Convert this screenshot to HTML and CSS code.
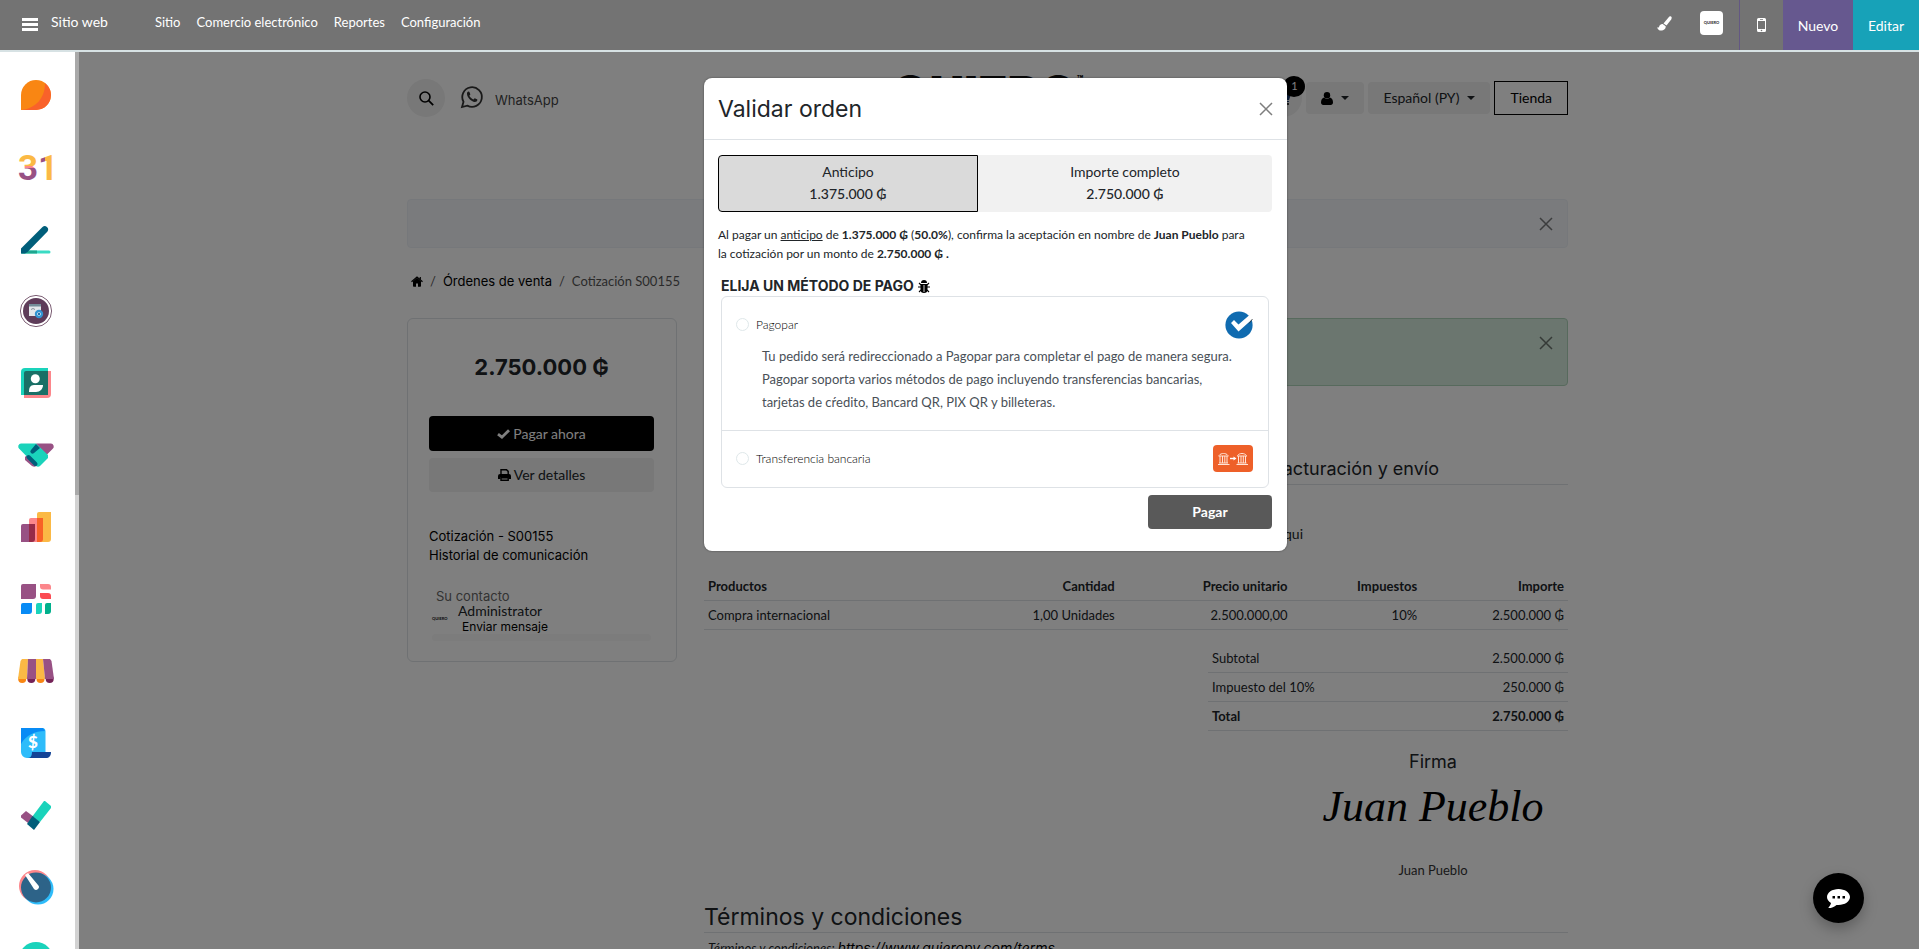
FILE: index.html
```html
<!DOCTYPE html>
<html lang="es">
<head>
<meta charset="utf-8">
<title>Cotización S00155</title>
<link rel="stylesheet" href="styles.css">
</head>
<body>
<header class="topbar">
  <button class="topbar-menu" aria-label="Menú"><svg width="16" height="14" viewBox="0 0 16 14"><path d="M0 1h16v3H0zM0 6h16v3H0zM0 11h16v3H0z" fill="#fff"/></svg></button>
  <a class="topbar-brand" href="#">Sitio web</a>
  <nav class="topbar-nav">
    <a href="#">Sitio</a><a href="#">Comercio electrónico</a><a href="#">Reportes</a><a href="#">Configuración</a>
  </nav>
  <div class="topbar-tools">
    <button class="tool-brush" aria-label="Tema"><svg width="15" height="15" viewBox="0 0 15 15"><path d="M14 .5c1 .7.8 1.800.2 2.900L9.500 9.500 6.500 7.400 11.500 1.400C12.300.5 13.100 0 14 .5z" fill="#fff"/><path d="M5.700 8.100l3 2.200c.2 2.500-1.700 4.300-4.700 4.300-1.800 0-3.300-1.200-3.900-3.400 1.300.7 1.800.3 2.200-.9.500-1.400 1.700-2.400 3.400-2.200z" fill="#fff"/></svg></button>
    <button class="tool-user" aria-label="Cuenta"><span>QUIERO</span></button>
    <button class="tool-phone" aria-label="Vista móvil"><svg width="9" height="14" viewBox="0 0 9 14"><path fill-rule="evenodd" d="M1.500 0h6A1.500 1.500 0 0 1 9 1.500v11A1.500 1.500 0 0 1 7.500 14h-6A1.500 1.500 0 0 1 0 12.500v-11A1.500 1.500 0 0 1 1.500 0zM1 3v8h7V3zM4.500 11.700a.8.8 0 1 0 0 1.600.8.8 0 0 0 0-1.600zM3 1.200v.7h3v-.7z" fill="#fff"/></svg></button>
    <button class="tool-new">Nuevo</button>
    <button class="tool-edit">Editar</button>
  </div>
</header>
<div class="shell">
  <aside class="apps">
    <a href="#" aria-label="Conversaciones"><svg viewBox="0 0 36 36"><path d="M3 18a15 15 0 0 1 30 0v0a15 15 0 0 1-15 15H3z" fill="#f98613"/><path d="M27 6a15 15 0 0 1-9 27H4C18 31 27 21 27 6z" fill="#f9622a"/></svg></a>
    <a href="#" aria-label="Calendario"><svg viewBox="0 0 36 36"><defs><linearGradient id="g3" gradientUnits="userSpaceOnUse" x1="0" y1="4" x2="0" y2="32"><stop offset=".45" stop-color="#fbb945"/><stop offset=".45" stop-color="#fc868b"/><stop offset=".55" stop-color="#fc868b"/><stop offset=".55" stop-color="#985184"/></linearGradient><linearGradient id="g1" gradientUnits="userSpaceOnUse" x1="18" y1="0" x2="36" y2="0"><stop offset=".5" stop-color="#985184"/><stop offset=".5" stop-color="#fbb945"/></linearGradient></defs><text x="0" y="31" class="cal"><tspan fill="url(#g3)">3</tspan><tspan fill="url(#g1)">1</tspan></text></svg></a>
    <a href="#" aria-label="Firma"><svg viewBox="0 0 36 36"><path d="M8 29.500h23a1.500 1.500 0 0 1 0 3H3z" fill="#3adbc4"/><path d="M8 29.500h11v3H3z" fill="#1ea68f"/><path d="M24.500 6a3.400 3.400 0 0 1 5 4.500L9.500 31 7 32.500H3v-5z" fill="#005e7a"/></svg></a>
    <a href="#" aria-label="Contenido"><svg viewBox="0 0 36 36"><circle cx="18" cy="18" r="15.600" fill="#fff" stroke="#7d5f75" stroke-width="1"/><circle cx="18" cy="18" r="13" fill="#5e3c59"/><path d="M11 11h12v12H11z" fill="#e2e7ea"/><path d="M11 11h12v2.500H11z" fill="#738d98"/><path d="M13 16.500l2-1 2 1" stroke="#869199" fill="none"/><circle cx="21" cy="21" r="3" fill="#fff" stroke="#3194d2" stroke-width="2.400"/><circle cx="21" cy="21" r="1.200" fill="#1c6eaa"/></svg></a>
    <a href="#" aria-label="Contactos"><svg viewBox="0 0 36 36"><path d="M6 6h27v23a4 4 0 0 1-4 4H6z" fill="#fc868b"/><path d="M7 3h23v27H3V7a4 4 0 0 1 4-4z" fill="#1ad3bb"/><path d="M8 6h22v24H6V8a2 2 0 0 1 2-2z" fill="#1a6f66"/><circle cx="17.300" cy="13.700" r="4.500" fill="#fff"/><path d="M16 20h9c0 4-3 7-7 7h-7c0-4 1-7 5-7z" fill="#fff"/></svg></a>
    <a href="#" aria-label="CRM"><svg viewBox="0 0 36 36"><path d="M18 6.500h15a3 3 0 0 1 2 5L28.500 18z" fill="#985184"/><path d="M10 17L7 20v3l7 6c2 1 4 1 5-1z" fill="#985184"/><path d="M3 6.500h15L30 18v3l-8 8c-1 1-3 1-4 0L1 11.500a3 3 0 0 1 2-5z" fill="#1ad3bb"/><path d="M18 7l4 4h0l-6 5a2 2 0 0 1-3-3z" fill="#005e7a"/><path d="M10.500 20l7 7" stroke="#005e7a" stroke-width="4" stroke-linecap="round"/></svg></a>
    <a href="#" aria-label="Ventas"><svg viewBox="0 0 36 36"><path d="M21 3h12v27a3 3 0 0 1-3 3H19V5a2 2 0 0 1 2-2z" fill="#fbb945"/><path d="M13 9h6v24h-8V11a2 2 0 0 1 2-2z" fill="#fc868b"/><path d="M19 9h6v21a3 3 0 0 1-3 3h-3z" fill="#f86126"/><path d="M5 15h6v18H3V17a2 2 0 0 1 2-2z" fill="#985184"/><path d="M11 15h6v15a3 3 0 0 1-3 3h-3z" fill="#962b48"/></svg></a>
    <a href="#" aria-label="Tableros"><svg viewBox="0 0 36 36"><path d="M5 3h13v12a3 3 0 0 1-3 3H3V5a2 2 0 0 1 2-2z" fill="#985184"/><path d="M22 3h8a3 3 0 0 1 3 3v2.600h-8a3 3 0 0 1-3-3z" fill="#fc868b"/><path d="M22 12h8a3 3 0 0 1 3 3v3h-8a3 3 0 0 1-3-3z" fill="#fb4b53"/><path d="M5 22h9v8a3 3 0 0 1-3 3H3v-9a2 2 0 0 1 2-2z" fill="#088bf5"/><path d="M20 22h4v8a3 3 0 0 1-3 3h-3v-9a2 2 0 0 1 2-2z" fill="#1ad3bb"/><path d="M29 22h4v8a3 3 0 0 1-3 3h-3v-9a2 2 0 0 1 2-2z" fill="#00b08c"/></svg></a>
    <a href="#" aria-label="Punto de venta"><svg viewBox="0 0 36 36"><g fill="#f98613"><circle cx="4.200" cy="26" r="4"/><circle cx="22.500" cy="26" r="4"/></g><g fill="#742257"><circle cx="13.300" cy="26" r="4"/><circle cx="31.700" cy="26" r="4"/></g><path d="M4 6h6L9 26H0L2.500 8z" fill="#fbb945"/><path d="M10 6h8v20H9z" fill="#985184"/><path d="M18 6h7l2 20h-9z" fill="#fbb945"/><path d="M25 6h7l1.500 2L36 26h-9z" fill="#985184"/></svg></a>
    <a href="#" aria-label="Facturación"><svg viewBox="0 0 36 36"><path d="M3 3h22a3 3 0 0 1 2.500 3v22a5 5 0 0 1-5 5H9a6 6 0 0 1-6-6z" fill="#2ebcfa"/><path d="M3 3h22l2 3C17 6 8 10 3 19z" fill="#088bf5"/><path d="M14 27h19c0 4-2 6-5 6H10c3 0 4-3 4-6z" fill="#144496"/><text x="10" y="23" class="usd" fill="#fff">$</text></svg></a>
    <a href="#" aria-label="Tareas"><svg viewBox="0 0 36 36"><path d="M26 4l1 0 6 5v2L22 25l-8-5z" fill="#1ad3bb"/><path d="M8 14l8 6-6 6-7-5.500v-2z" fill="#985184"/><path d="M14.500 19l7.500 6-6 8-7-6z" fill="#005e7a"/></svg></a>
    <a href="#" aria-label="Horas"><svg viewBox="0 0 36 36"><circle cx="17" cy="17" r="16" fill="#fc868b"/><circle cx="20" cy="20" r="15.500" fill="#2ebcfa"/><circle cx="18" cy="18.500" r="15" fill="#2d6388"/><path d="M7 6l3-2 10 12a2.500 2.500 0 0 1-4 4z" fill="#fff"/></svg></a>
    <a href="#" aria-label="Más"><svg viewBox="0 0 36 36"><circle cx="18" cy="18" r="17" fill="#1ad3bb"/></svg></a>
  </aside>
  <div class="apps-track"></div>
  <main class="stage">
    <div class="page">
      <div class="site-head">
        <div class="head-left">
          <button class="round" aria-label="Buscar"><svg width="15" height="15" viewBox="0 0 15 15"><circle cx="6" cy="6" r="5" fill="none" stroke="#000" stroke-width="1.600"/><path d="M9.700 9.700l4.500 4.500" stroke="#000" stroke-width="1.800"/></svg></button>
          <a class="wa" href="#"><svg width="22" height="22" viewBox="0 0 22 22"><path d="M1 21l1.500-5.200A9.800 9.800 0 1 1 6.300 19.600z" fill="none" stroke="#333" stroke-width="1.800"/><path d="M7.500 5.500c-1 .3-1.600 1.200-1.500 2.400.3 3.700 4.300 7.600 7.700 8 1.400.1 2.600-.8 2.700-2 .1-.5-.1-.6-2.500-1.700-.6-.2-1 1.300-1.600 1.200-1.500-.4-3.600-2.400-3.900-3.600 0-.4 1-1 .9-1.500-.7-2-.8-2.900-1.800-2.800z" fill="#333"/></svg><span>WhatsApp</span></a>
        </div>
        <a class="logo" href="#">QUIERO<sup>™</sup></a>
        <div class="head-right">
          <button class="round cart" aria-label="Carrito"><svg width="15" height="13" viewBox="0 0 15 13"><path d="M0 0h3l.5 2H15l-2 6H4.500l.2 1H13v1H4L2.300 1H0z" fill="#1c3a70"/><circle cx="5" cy="12" r="1"/><circle cx="12" cy="12" r="1"/></svg><span class="badge">1</span></button>
          <button class="soft" aria-label="Usuario"><svg width="12" height="13" viewBox="0 0 12 13"><circle cx="6" cy="3.200" r="3.200"/><path d="M3 5.500C1 6 0 8 0 10.500 0 12 1 13 2.200 13h7.600C11 13 12 12 12 10.500 12 8 11 6 9 5.500a4.300 4.300 0 0 1-6 0z"/></svg><i class="caret"></i></button>
          <button class="soft">Español (PY)<i class="caret"></i></button>
          <a class="shop" href="#">Tienda</a>
        </div>
      </div>
      <div class="alert info"><button class="x" aria-label="Cerrar"><svg width="14" height="14" viewBox="0 0 14 14"><path d="M1 1l12 12M13 1L1 13" stroke="#000" stroke-width="1.500"/></svg></button></div>
      <nav class="crumbs">
        <a href="#" aria-label="Inicio"><svg width="12" height="11" viewBox="0 0 12 11"><path d="M6 1.800l4 3.500V10a.7.7 0 0 1-.7.700H7V7.500H5v3.200H2.700A.7.700 0 0 1 2 10V5.300z"/><path d="M.5 5.800L6 1l5.500 4.800M9.300 1v3" fill="none" stroke="#000" stroke-width="1.200"/></svg></a><span>/</span><a class="head-font" href="#">Órdenes de venta</a><span>/</span><span>Cotización S00155</span>
      </nav>
      <div class="cols">
        <section class="card">
          <h2>2.750.000 ₲</h2>
          <button class="btn dark"><svg width="13" height="10" viewBox="0 0 13 10"><path d="M1 5.200l3.900 3L12 1.200" fill="none" stroke="#fff" stroke-width="2.800"/></svg>Pagar ahora</button>
          <button class="btn light"><svg width="13" height="12" viewBox="0 0 13 12"><path d="M3 5.500V.7h5.500l1.700 1.700v3.100M3 8.700v2.600h7.200V8.700z" fill="none" stroke="#000" stroke-width="1.400"/><path fill-rule="evenodd" d="M2 5h9a2 2 0 0 1 2 2v3h-2.500V8h-8v2H0V7a2 2 0 0 1 2-2z"/></svg>Ver detalles</button>
          <div class="links"><a href="#">Cotización - S00155</a><a href="#">Historial de comunicación</a></div>
          <div class="contact">
            <p class="contact-title">Su contacto</p>
            <div class="contact-row"><span class="mini">QUIERO</span><div><p class="who">Administrator</p><a href="#">Enviar mensaje</a></div></div>
            <div class="strip"></div>
          </div>
        </section>
        <section class="order">
          <div class="alert ok"><button class="x" aria-label="Cerrar"><svg width="14" height="14" viewBox="0 0 14 14"><path d="M1 1l12 12M13 1L1 13" stroke="#000" stroke-width="1.500"/></svg></button></div>
          <h3 class="ship">facturación y envío</h3>
          <p class="addr">Aqui</p>
          <table class="lines">
            <thead><tr><th>Productos</th><th>Cantidad</th><th>Precio unitario</th><th>Impuestos</th><th>Importe</th></tr></thead>
            <tbody><tr><td>Compra internacional</td><td>1,00 Unidades</td><td>2.500.000,00</td><td>10%</td><td>2.500.000 ₲</td></tr></tbody>
          </table>
          <table class="totals">
            <tbody><tr><td>Subtotal</td><td>2.500.000 ₲</td></tr><tr><td>Impuesto del 10%</td><td>250.000 ₲</td></tr><tr class="sum"><td>Total</td><td>2.750.000 ₲</td></tr></tbody>
          </table>
          <div class="sign"><h4>Firma</h4><p class="ink">Juan Pueblo</p><p>Juan Pueblo</p></div>
          <h3 class="terms">Términos y condiciones</h3>
          <p class="terms-link"><em>Términos y condiciones: <a href="#">https://www.quieropy.com/terms</a></em></p>
        </section>
      </div>
    </div>
    <div class="backdrop">
      <form class="modal" role="dialog" aria-labelledby="mt">
        <div class="modal-head"><h2 id="mt">Validar orden</h2><button type="button" class="x" aria-label="Cerrar"><svg width="14" height="14" viewBox="0 0 14 14"><path d="M1 1l12 12M13 1L1 13" stroke="#000" stroke-width="1.500"/></svg></button></div>
        <div class="modal-body">
          <div class="amounts"><button type="button" class="on"><span>Anticipo</span><b>1.375.000 ₲</b></button><button type="button"><span>Importe completo</span><b>2.750.000 ₲</b></button></div>
          <p class="consent">Al pagar un <u>anticipo</u> de <b>1.375.000 ₲</b> (<b>50.0%</b>), confirma la aceptación en nombre de <b>Juan Pueblo</b> para la cotización por un monto de <b>2.750.000 ₲ .</b></p>
          <h4 class="pick">ELIJA UN MÉTODO DE PAGO <svg width="12" height="13" viewBox="0 0 12 13"><path d="M3 3a3 3 0 0 1 6 0zM2.500 4h7v5.500a3.500 3.500 0 0 1-7 0z"/><path d="M0 7h12M1 3l2 2M11 3L9 5M1 12l2-2M11 12l-2-2" stroke="#000" stroke-width="1.100"/><path d="M6 5v7" stroke="#fff" stroke-width=".8"/></svg></h4>
          <ul class="methods">
            <li>
              <div class="method"><input type="radio" name="pay" id="m1"><label for="m1">Pagopar</label><svg class="pp" width="28" height="28" viewBox="0 0 28 28"><circle cx="14" cy="14" r="13.600" fill="#106bb0"/><path d="M6 12l3-3 4.500 4.500L24.500 4l3 4-14 12.500z" fill="#fff"/><path d="M27.500 8l-3.500 4.500" stroke="#333" stroke-width=".8"/></svg></div>
              <p>Tu pedido será redireccionado a Pagopar para completar el pago de manera segura. Pagopar soporta varios métodos de pago incluyendo transferencias bancarias, tarjetas de cŕedito, Bancard QR, PIX QR y billeteras.</p>
            </li>
            <li>
              <div class="method"><input type="radio" name="pay" id="m2"><label for="m2">Transferencia bancaria</label><svg class="bank" width="40" height="27" viewBox="0 0 40 27"><rect width="40" height="27" rx="4" fill="#ee6029"/><g fill="none" stroke="#ffe4d6" stroke-width="1"><path id="bk" d="M5.500 11h10M6 10.500c1-1.500 3-2 4.500-2s3.500.5 4.500 2M7 11v7M9.500 11v7M11.800 11v7M14 11v7M6 18h9M5 19.500h11.500"/><use href="#bk" x="18.500"/></g><path d="M17 13.500h4" stroke="#fff" stroke-width="1.400"/><path d="M20.500 11.500l3 2-3 2z" fill="#fff"/></svg></div>
            </li>
          </ul>
          <button type="submit" class="pay">Pagar</button>
        </div>
      </form>
    </div>
  </main>
</div>
<button class="chat" aria-label="Chat"><svg width="23" height="19" viewBox="0 0 23 19"><path d="M11.500 0C17.800 0 23 3.600 23 8s-5.200 8-11.500 8l-2-.1C7.500 18 4.500 19 1.500 19c-.4-.5 2-2 2.500-5C1.500 12.600 0 10.400 0 8c0-4.400 5.200-8 11.500-8z" fill="#fff"/><path d="M5.500 7h2.500v2.500H5.500zM10.500 7H13v2.500h-2.500zM15.500 7H18v2.500h-2.500z"/></svg></button>
</body>
</html>
```

FILE: styles.css
```css
* { box-sizing: border-box; }
body {
  margin: 0;
  height: 100vh;
  overflow: hidden;
  display: flex;
  flex-direction: column;
  font: 14px/20px Lato, "Noto Sans", sans-serif;
  color: #212529;
  background: #fff;
}
h2, h3, h4, p, ul { margin: 0; padding: 0; }
h2, h3, h4, .head-font, .wa, .links, .contact-title, .contact a { font-family: Inter, "Noto Sans", sans-serif; font-weight: 400; }
a { color: inherit; text-decoration: none; }
button { font: inherit; color: inherit; border: 0; padding: 0; background: none; display: flex; align-items: center; justify-content: center; }
svg { display: block; flex: none; overflow: visible; }

.topbar { flex: none; height: 52px; background: #737373; border-bottom: 2px solid #d7e2e4; display: flex; color: #fff; font-size: 13px; }
.topbar-menu { margin-left: 22px; height: 48px; }
.topbar-brand { margin-left: 13px; width: 104px; font-size: 14px; line-height: 44px; }
.topbar-nav { display: flex; gap: 16px; line-height: 44px; }
.topbar-tools { margin-left: auto; display: flex; font-size: 14px; }
.tool-brush { width: 30px; height: 46px; margin-right: 21px; }
.tool-user { width: 23px; height: 24px; margin: 11px 16px 0 0; background: #fff; border-radius: 4px; color: #333; font-size: 4px; font-weight: 900; }
.tool-phone { width: 44px; border-left: 1px solid #635783; }
.tool-new { width: 70px; padding-top: 2px; background: #66588f; }
.tool-edit { width: 66px; padding-top: 2px; background: #17a2b8; }

.shell { flex: 1; min-height: 0; display: flex; }
.apps { flex: none; width: 75px; padding: 25px 3px 0 0; overflow: hidden; display: flex; flex-direction: column; align-items: center; gap: 36px; }
.apps svg { width: 36px; height: 36px; }
.cal { font: 700 35px "Liberation Sans Narrow", Roboto, sans-serif; }
.usd { font: 900 17px Lato, sans-serif; }
.apps-track { flex: none; width: 4px; background: linear-gradient(#a9a9a9 443px, #d2d2d2 443px); }
.stage { flex: 1; min-width: 0; position: relative; overflow: hidden; padding-right: 23px; }
.page { max-width: 1161px; margin: 0 auto; }

.site-head { display: grid; grid-template-columns: 1fr auto 1fr; height: 147px; padding-top: 24px; align-items: start; }
.head-left, .head-right { display: flex; align-items: center; height: 44px; }
.head-right { justify-content: flex-end; gap: 4px; }
.round { width: 38px; height: 38px; border-radius: 50%; background: #f0f0f0; }
.wa { display: flex; gap: 12px; margin-left: 16px; font-size: 13px; color: #444; }
.wa span { padding-top: 4px; }
.logo { font: 900 48px/36px Inter, sans-serif; color: #111; }
.logo sup { font-size: 10px; vertical-align: 28px; line-height: 0; }
.cart { position: relative; }
.badge { position: absolute; right: -3px; top: -3px; width: 22px; height: 21px; border-radius: 50%; background: #000; color: #fff; font-size: 11px; line-height: 20px; }
.soft { height: 32px; padding: 0 15px; gap: 8px; border-radius: 4px; background: #f0f0f0; }
.caret { border: 4px solid transparent; border-top-color: #212529; border-bottom: 0; }
.shop { border: 1px solid #000; padding: 6px 15px; color: #000; }

.alert { display: flex; justify-content: flex-end; border: 1px solid; border-radius: 4px; }
.x { width: 14px; height: 14px; opacity: .5; }
.info { height: 49px; padding: 17px 14px; background: #f4f7fb; border-color: #edf1f6; }
.ok { height: 68px; padding: 17px 14px; background: #d7eddf; border-color: #afd4bb; }
.crumbs { display: flex; gap: 7px; align-items: center; padding: 23px 4px 27px; height: 70px; font-size: 13px; color: #555; }
.crumbs a { color: #000; }

.cols { display: flex; gap: 27px; }
.card { flex: none; width: 270px; height: 344px; border: 1px solid #dee2e6; border-radius: 6px; padding: 33px 22px 0 21px; }
.card h2 { font-size: 22px; line-height: 30px; font-weight: 700; text-align: center; margin-bottom: 34px; }
.btn { width: 100%; height: 35px; gap: 3px; border-radius: 4px; margin-bottom: 7px; }
.dark { background: #000; color: #fff; }
.light { height: 34px; background: #f0f0f0; }
.links { display: flex; flex-direction: column; margin-top: 35px; font-size: 13px; line-height: 19px; color: #000; }
.contact { padding: 24px 3px 0; }
.contact-title { font-size: 13px; line-height: 14px; color: #666; padding-left: 4px; }
.contact-row { display: flex; gap: 12px; line-height: 15px; align-items: center; }
.contact-row a { font-size: 12px; padding-left: 4px; color: #000; }
.mini { font-size: 4px; font-weight: 900; width: 14px; }
.strip { height: 7px; border-radius: 4px; background: #f8f8f8; }

.order { flex: 1; min-width: 0; }
.ship { margin-top: 68px; padding: 0 129px 0 0; text-align: right; font-size: 18px; line-height: 30px; border-bottom: 1px solid #dee2e6; }
.addr { padding: 39px 265px 0 0; text-align: right; }
table { border-collapse: collapse; font-size: 13px; }
th, td { padding: 4px; border-bottom: 1px solid #dee2e6; text-align: right; font-weight: 400; }
th { font-weight: 700; }
th:first-child, td:first-child { text-align: left; }
.lines { width: 100%; table-layout: fixed; margin-top: 28px; }
.lines th:nth-child(1) { width: 27%; }
.lines th:nth-child(2) { width: 21%; }
.lines th:nth-child(3) { width: 20%; }
.lines th:nth-child(4) { width: 15%; }
.totals { width: 360px; margin: 14px 0 0 auto; }
.sum td { font-weight: 700; }
.sign { width: 270px; margin: 18px 0 0 auto; text-align: center; font-size: 13px; color: #333; }
.sign h4 { font-size: 18px; line-height: 26px; color: #212529; }
.ink { font: italic 44px/64px "Liberation Serif", serif; color: #000; padding-bottom: 21px; }
.terms { margin-top: 22px; font-size: 23px; line-height: 30px; border-bottom: 1px solid #dee2e6; }
.terms-link { padding: 5px 4px; font-size: 13px; white-space: nowrap; }
.terms-link a { font: italic 14px Inter, sans-serif; color: #000; }

.backdrop { position: absolute; inset: 0; padding: 26px 7px 0 0; background: rgba(0, 0, 0, .5); }
.modal { width: 583px; margin: 0 auto; background: #fff; border-radius: 8px; box-shadow: 0 0 2px rgba(0, 0, 0, .5); }
.modal-head { display: flex; justify-content: space-between; align-items: center; height: 62px; padding: 0 14px; border-bottom: 1px solid #dee2e6; }
.modal-head h2 { font-size: 23px; }
.modal-body { padding: 15px 15px 22px 14px; display: flex; flex-direction: column; }
.amounts { display: flex; }
.amounts button { flex: 1 1 294px; height: 57px; padding-bottom: 2px; flex-direction: column; line-height: 22px; background: #f1f1f1; border-radius: 0 4px 4px 0; }
.amounts .on { flex: 1 1 260px; background: #dadada; border: 1px solid #000; border-radius: 4px 0 0 4px; }
.amounts b { font-weight: 500; }
.consent { margin-top: 13px; padding-right: 18px; font-size: 12px; line-height: 19px; }
.pick { display: flex; gap: 4px; align-items: center; margin: 13px 3px 0; font-size: 14px; line-height: 20px; font-weight: 700; }
.methods { list-style: none; margin: 0 3px; border: 1px solid #dee2e6; border-radius: 6px; }
.methods li { padding: 13px 15px 14px 14px; }
.methods li + li { border-top: 1px solid #dee2e6; }
.method { display: flex; align-items: center; height: 29px; }
.method input { appearance: none; width: 13px; height: 13px; margin: 0 7px 0 0; border: 1px solid #dfe8ea; border-radius: 50%; }
.method label { font-size: 12px; font-weight: 300; color: #000; }
.method svg { margin-left: auto; }
.methods p { padding: 6px 15px 2px 26px; font-size: 13px; line-height: 23px; color: #495057; }
.pay { align-self: flex-end; width: 124px; height: 34px; margin-top: 7px; border-radius: 4px; background: #595959; color: #fff; font-weight: 700; }

.chat { position: fixed; right: 55px; bottom: 26px; width: 51px; height: 50px; border-radius: 50%; background: #000; box-shadow: 0 6px 14px rgba(0, 0, 0, .25); }
```
